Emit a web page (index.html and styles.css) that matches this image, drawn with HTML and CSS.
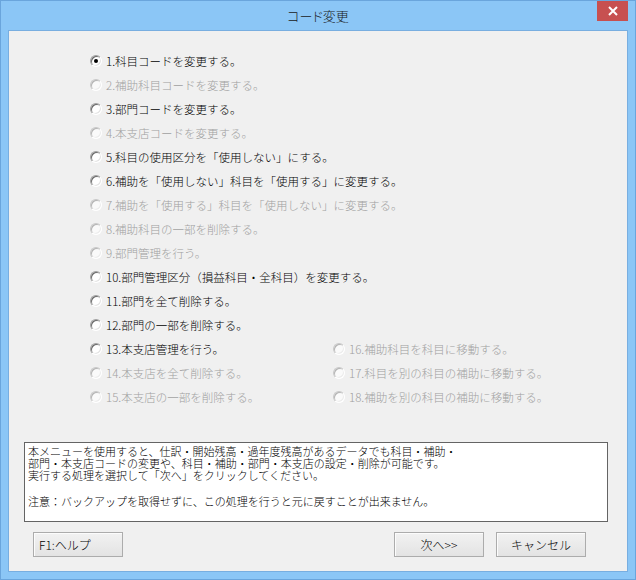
FILE: index.html
```html
<!DOCTYPE html>
<html lang="ja">
<head>
  <meta charset="UTF-8">
  <title>コード変更</title>
  <link rel="stylesheet" href="styles.css">
</head>
<body>
  <div class="window">
    <div class="titlebar">
      <span></span>
      <span class="title">コード変更</span>
      <button class="close-button" aria-label="閉じる">
        <svg width="10" height="10" viewBox="0 0 10 10">
          <path d="M1 1 L9 9 M9 1 L1 9" stroke="#fff" stroke-width="2" fill="none"/>
        </svg>
      </button>
    </div>

    <div class="client">
      <div class="options">
        <label class="option"><span class="radio checked"></span>1.科目コードを変更する。</label>
        <label class="option disabled"><span class="radio"></span>2.補助科目コードを変更する。</label>
        <label class="option"><span class="radio"></span>3.部門コードを変更する。</label>
        <label class="option disabled"><span class="radio"></span>4.本支店コードを変更する。</label>
        <label class="option"><span class="radio"></span>5.科目の使用区分を「使用しない」にする。</label>
        <label class="option"><span class="radio"></span>6.補助を「使用しない」科目を「使用する」に変更する。</label>
        <label class="option disabled"><span class="radio"></span>7.補助を「使用する」科目を「使用しない」に変更する。</label>
        <label class="option disabled"><span class="radio"></span>8.補助科目の一部を削除する。</label>
        <label class="option disabled"><span class="radio"></span>9.部門管理を行う。</label>
        <label class="option"><span class="radio"></span>10.部門管理区分（損益科目・全科目）を変更する。</label>
        <label class="option"><span class="radio"></span>11.部門を全て削除する。</label>
        <label class="option"><span class="radio"></span>12.部門の一部を削除する。</label>
        <div class="option-row">
          <label class="option"><span class="radio"></span>13.本支店管理を行う。</label>
          <label class="option disabled"><span class="radio"></span>16.補助科目を科目に移動する。</label>
        </div>
        <div class="option-row">
          <label class="option disabled"><span class="radio"></span>14.本支店を全て削除する。</label>
          <label class="option disabled"><span class="radio"></span>17.科目を別の科目の補助に移動する。</label>
        </div>
        <div class="option-row">
          <label class="option disabled"><span class="radio"></span>15.本支店の一部を削除する。</label>
          <label class="option disabled"><span class="radio"></span>18.補助を別の科目の補助に移動する。</label>
        </div>
      </div>

      <div class="message">
        <p>本メニューを使用すると、仕訳・開始残高・過年度残高があるデータでも科目・補助・</p>
        <p>部門・本支店コードの変更や、科目・補助・部門・本支店の設定・削除が可能です。</p>
        <p>実行する処理を選択して「次へ」をクリックしてください。</p>
        <p class="note">注意：バックアップを取得せずに、この処理を行うと元に戻すことが出来ません。</p>
      </div>

      <div class="buttons">
        <button class="button help">F1:ヘルプ</button>
        <button class="button next">次へ&gt;&gt;</button>
        <button class="button">キャンセル</button>
      </div>
    </div>
  </div>
</body>
</html>
```

FILE: styles.css
```css
* {
  margin: 0;
  padding: 0;
  box-sizing: border-box;
}

body {
  font-family: "Noto Sans CJK JP", "Noto Sans", sans-serif;
  font-weight: 300;
  background: #8bc6f6;
  color: #000;
  width: 636px;
  height: 580px;
  overflow: hidden;
}

.window {
  width: 636px;
  height: 580px;
  display: flex;
  flex-direction: column;
  background: #8bc6f6;
  border: 1px solid #6aa5dc;
  padding: 0 7px 7px 7px;
}

.titlebar {
  height: 29px;
  display: grid;
  grid-template-columns: 1fr auto 1fr;
  align-items: start;
}

.title {
  font-size: 13px;
  line-height: 29px;
  color: #1a1a1a;
  font-feature-settings: "palt";
}

.close-button {
  justify-self: end;
  width: 31px;
  height: 20px;
  border: none;
  background: #c75050;
  display: flex;
  align-items: center;
  justify-content: center;
}

.client {
  flex: 1;
  background: #f0f0f0;
  border: 1px solid #78aee0;
  display: flex;
  flex-direction: column;
}

.options {
  padding: 18px 0 0 81px;
  display: flex;
  flex-direction: column;
}

.option {
  height: 24px;
  display: flex;
  align-items: center;
  font-size: 11.5px;
  white-space: nowrap;
}

.option.disabled {
  color: #a0a0a0;
}

.option-row {
  display: flex;
}

.option-row .option:first-child {
  width: 243px;
}

.radio {
  width: 12px;
  height: 12px;
  border-radius: 50%;
  margin-right: 4px;
  background: #fff;
  border: 1px solid;
  border-color: #a0a0a0 #ffffff #ffffff #a0a0a0;
  box-shadow: inset 1px 1px 0 #696969, inset -1px -1px 0 #e3e3e3;
  display: flex;
  align-items: center;
  justify-content: center;
  flex-shrink: 0;
}

.radio.checked::after {
  content: "";
  width: 4px;
  height: 4px;
  border-radius: 50%;
  background: #000;
}

.disabled .radio {
  background: #fafafa;
  border-color: #c8c8c8 #ffffff #ffffff #c8c8c8;
  box-shadow: inset 1px 1px 0 #b4b4b4, inset -1px -1px 0 #ececec;
}

.message {
  margin: 33px 0 0 15px;
  width: 584px;
  height: 80px;
  background: #fff;
  border: 1px solid #646464;
  padding: 2px 3px;
  font-size: 11px;
  line-height: 12px;
}

.message .note {
  margin-top: 14px;
}

.buttons {
  margin-top: 10px;
  display: flex;
  gap: 12px;
  padding: 0 41px 0 24px;
}

.button {
  width: 90px;
  height: 25px;
  font-family: inherit;
  font-weight: 300;
  font-size: 12px;
  color: #000;
  background: linear-gradient(#f2f2f2, #e3e3e3);
  border: 1px solid #acacac;
  box-shadow: inset 1px 1px 0 #fcfcfc;
}

.button.help {
  text-align: left;
  padding-left: 5px;
}

.button.next {
  margin-left: auto;
}
```
